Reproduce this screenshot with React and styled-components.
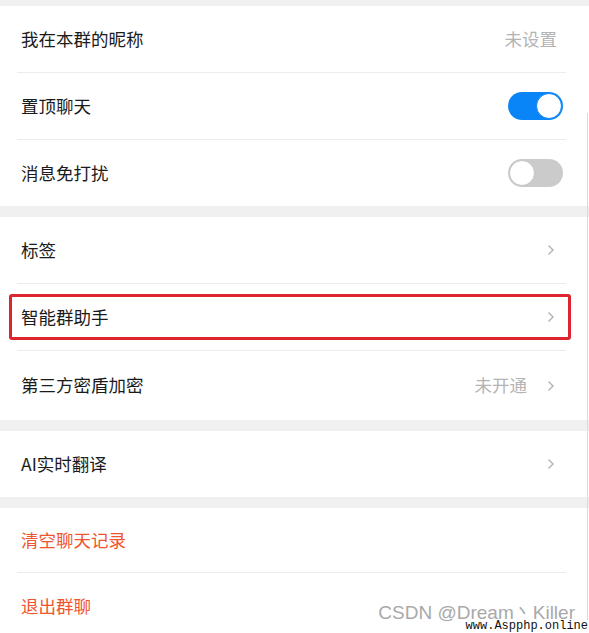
import styled, { createGlobalStyle } from "styled-components";

const GlobalStyle = createGlobalStyle`
  html, body {
    margin: 0;
    padding: 0;
    background: #f0f0f0;
  }
  body {
    font-family: "Noto Sans CJK SC", "Liberation Sans", sans-serif;
  }
`;

const Page = styled.div`
  position: relative;
  width: 589px;
  height: 633px;
  overflow: hidden;
  background: #f0f0f0;
  padding-top: 6px;
  box-sizing: border-box;
  display: flex;
  flex-direction: column;
  gap: 11px;
`;

const Section = styled.div`
  background: #fff;
  display: flex;
  flex-direction: column;
`;

const Row = styled.div`
  position: relative;
  flex: none;
  height: ${(p) => p.$h || 66}px;
  display: flex;
  align-items: center;
  padding: 0 26px 0 21px;
  box-sizing: border-box;
`;

const Divider = styled.div`
  flex: none;
  height: 1px;
  margin: 0 23px 0 17px;
  background: #ececec;
`;

const Label = styled.span`
  flex: 1;
  font-size: 17.5px;
  margin-top: -2px;
  color: ${(p) => (p.$danger ? "#ef5530" : "#1b1b1b")};
`;

const Value = styled.span`
  font-size: 17.5px;
  margin-top: -2px;
  color: #b4b4b4;
  margin-right: ${(p) => (p.$arrow ? "20px" : "6px")};
`;

const Arrow = styled.svg`
  width: 8px;
  height: 12px;
  margin-right: 8px;
`;

const Toggle = styled.div`
  width: 55px;
  height: 28px;
  border-radius: 14px;
  box-sizing: border-box;
  background: ${(p) => (p.$on ? "#0a85f7" : "#cbcbcb")};
  display: flex;
  align-items: center;
  justify-content: ${(p) => (p.$on ? "flex-end" : "flex-start")};
  padding: 1px;
`;

const Knob = styled.div`
  width: 26px;
  height: 26px;
  border-radius: 50%;
  background: #fff;
  box-sizing: border-box;
  border: 1px solid ${(p) => (p.$on ? "#0a85f7" : "#c4c4c4")};
`;

const Highlight = styled.div`
  position: absolute;
  top: 10px;
  bottom: 10px;
  left: 9px;
  right: 18px;
  border: 3px solid #dc2531;
  border-radius: 3px;
  pointer-events: none;
`;

const EdgeLine = styled.div`
  position: absolute;
  right: 1px;
  top: 113px;
  bottom: 0;
  width: 1px;
  background: #dadada;
`;

const Watermark = styled.div`
  position: absolute;
  right: 14px;
  bottom: 9px;
  font-family: "Liberation Sans", Arial, sans-serif;
  font-size: 19px;
  line-height: 22px;
  color: #a9a9a9;
  text-shadow: 0 0 2px #fff, 0 0 1px #fff;
`;

const SiteTag = styled.div`
  position: absolute;
  right: 0;
  bottom: 0;
  background: #fff;
  padding: 0 1px;
  font-family: "Liberation Mono", monospace;
  font-size: 12px;
  line-height: 13px;
  color: #111;
`;

const Chevron = () => (
  <Arrow viewBox="0 0 8 12">
    <path d="M1.5 1.5 L6 6 L1.5 10.5" fill="none" stroke="#b1b1b1" strokeWidth="1.4" />
  </Arrow>
);

const Switch = ({ on }) => (
  <Toggle $on={on}>
    <Knob $on={on} />
  </Toggle>
);

const App = () => {
  return (
    <>
      <GlobalStyle />
      <Page>
        <Section>
          <Row>
            <Label>我在本群的昵称</Label>
            <Value>未设置</Value>
          </Row>
          <Divider />
          <Row>
            <Label>置顶聊天</Label>
            <Switch on />
          </Row>
          <Divider />
          <Row>
            <Label>消息免打扰</Label>
            <Switch />
          </Row>
        </Section>

        <Section>
          <Row>
            <Label>标签</Label>
            <Chevron />
          </Row>
          <Divider />
          <Row>
            <Label>智能群助手</Label>
            <Chevron />
            <Highlight />
          </Row>
          <Divider />
          <Row $h={69}>
            <Label>第三方密盾加密</Label>
            <Value $arrow>未开通</Value>
            <Chevron />
          </Row>
        </Section>

        <Section>
          <Row>
            <Label>AI实时翻译</Label>
            <Chevron />
          </Row>
        </Section>

        <Section>
          <Row $h={64}>
            <Label $danger>清空聊天记录</Label>
          </Row>
          <Divider />
          <Row>
            <Label $danger>退出群聊</Label>
          </Row>
        </Section>

        <EdgeLine />
        <Watermark>CSDN @Dream丶Killer</Watermark>
        <SiteTag>www.Aspphp.online</SiteTag>
      </Page>
    </>
  );
};

export default App;
